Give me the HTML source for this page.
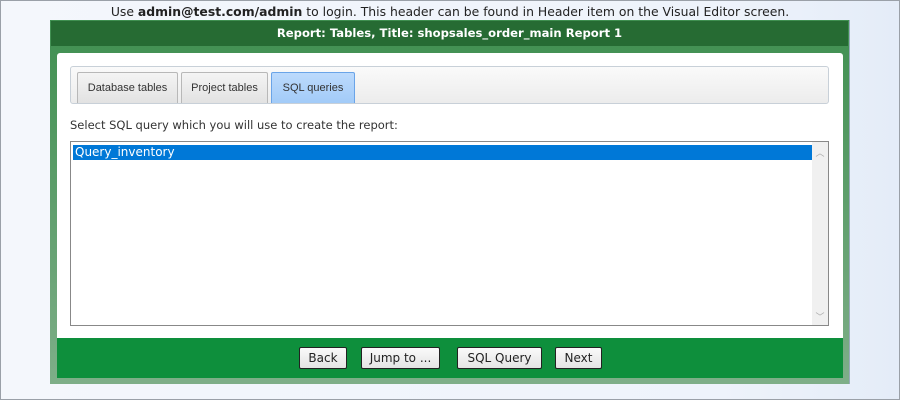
<!DOCTYPE html>
<html><head><style>
body{margin:0;width:900px;height:400px;overflow:hidden;background:linear-gradient(90deg,#f4f7fc,#eef3fb 80%,#e4ecf8);font-family:"Liberation Sans",sans-serif;position:relative}
.frame{position:absolute;left:0;top:0;width:898px;height:398px;border:1px solid #9aa0a8}
.top{position:absolute;top:4px;left:0;width:900px;text-align:center;font-family:"DejaVu Sans",sans-serif;font-size:12.4px;color:#222}
.panel{position:absolute;left:50px;top:20px;width:799px;height:364px;background:linear-gradient(180deg,#3f8f50,#7eae88);border-right:1px solid #9ab}
.hdr{position:absolute;left:1px;top:1px;right:1px;height:25px;background:#266b33;color:#fff;font-family:"DejaVu Sans",sans-serif;font-weight:bold;font-size:11.6px;text-align:center;line-height:25px}
.inner{position:absolute;left:7px;top:33px;width:786px;height:285px;background:#fff;border-radius:3px 3px 0 0}
.tabs{position:absolute;left:13px;top:13px;width:757px;height:36px;border:1px solid #c8d0d8;background:linear-gradient(#fafafa,#ececec);border-radius:3px}
.tab{position:absolute;top:5px;height:30px;border:1px solid #b8b8b8;border-bottom:none;background:linear-gradient(#f4f4f4,#e2e2e2);font-size:11px;color:#333;line-height:30px;text-align:center;border-radius:2px 2px 0 0}
.lbl{position:absolute;left:13px;top:65px;color:#333;font-family:"DejaVu Sans",sans-serif;font-size:11.5px}
.list{position:absolute;left:13px;top:88px;width:757px;height:183px;border:1px solid #888;background:#fff}
.sel{position:absolute;left:2px;top:3px;width:739px;height:15px;background:#0078d7;color:#fff;font-family:"DejaVu Sans",sans-serif;font-size:12px;line-height:15px;padding-left:2px}
.sb{position:absolute;right:0;top:0;width:16px;height:183px;background:#f0f0f0;color:#aaa;font-size:9px;text-align:center}
.foot{position:absolute;left:7px;top:318px;width:786px;height:40px;background:#0e8f3c}
.btn{position:absolute;top:9px;height:20px;border:1px solid #222;background:linear-gradient(#fafafa,#e4e4e4);font-family:"DejaVu Sans",sans-serif;font-size:12px;line-height:20px;text-align:center;color:#222;border-radius:2px}
</style></head><body>
<div class="frame"></div>
<div class="top">Use <b>admin@test.com/admin</b> to login. This header can be found in Header item on the Visual Editor screen.</div>
<div class="panel">
<div class="hdr">Report: Tables, Title: shopsales_order_main Report 1</div>
<div class="inner">
<div class="tabs">
<div class="tab" style="left:6px;width:99px">Database tables</div>
<div class="tab" style="left:110px;width:85px">Project tables</div>
<div class="tab" style="left:200px;width:82px;background:linear-gradient(#bcdafc,#a2cbf8);border-color:#6aa4e8">SQL queries</div>
</div>
<div class="lbl">Select SQL query which you will use to create the report:</div>
<div class="list"><div class="sel">Query_inventory</div><div class="sb"><div style="margin-top:4px">︿</div><div style="position:absolute;bottom:2px;width:16px">﹀</div></div></div>
</div>
<div class="foot">
<div class="btn" style="left:242px;width:46px">Back</div>
<div class="btn" style="left:304px;width:77px">Jump to ...</div>
<div class="btn" style="left:400px;width:83px">SQL Query</div>
<div class="btn" style="left:498px;width:45px">Next</div>
</div>
</div>
</body></html>
